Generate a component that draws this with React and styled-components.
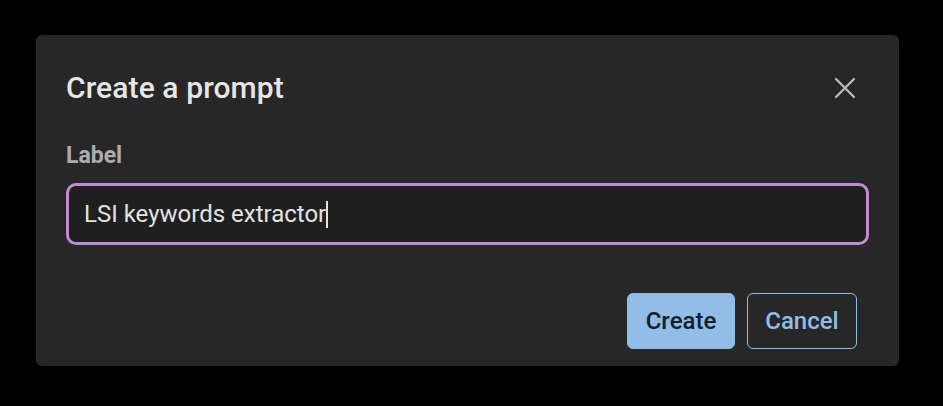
import React from "react";
import styled, { createGlobalStyle } from "styled-components";

const Global = createGlobalStyle`
  html, body { margin: 0; padding: 0; background: #000; }
  body { font-family: Roboto, "Noto Sans", sans-serif; }
`;

const Page = styled.div`
  width: 943px;
  height: 406px;
  padding: 35px 44px 40px 36px;
  box-sizing: border-box;
`;

const Dialog = styled.div`
  width: 863px;
  height: 331px;
  background: #272727;
  border-radius: 6px;
  box-sizing: border-box;
  padding: 35px 30px 17px 30px;
  display: flex;
  flex-direction: column;
`;

const Header = styled.div`
  height: 36px;
  display: flex;
  align-items: center;
  justify-content: space-between;
`;

const Title = styled.h2`
  margin: 0;
  font-size: 30px;
  line-height: 36px;
  font-weight: 500;
  letter-spacing: 0.1px;
  color: #e6e6e6;
`;

const CloseButton = styled.button`
  width: 40px;
  height: 40px;
  margin-right: 4px;
  border: none;
  background: transparent;
  display: flex;
  align-items: center;
  justify-content: center;
  padding: 0;
  cursor: pointer;
`;

const FieldLabel = styled.label`
  display: block;
  margin-top: 36px;
  font-size: 23px;
  font-weight: 700;
  color: #adadad;
  line-height: 28px;
`;

const InputBox = styled.div`
  margin-top: 13px;
  height: 62px;
  box-sizing: border-box;
  border: 3px solid #c08dd2;
  border-radius: 10px;
  background: #1f1f1f;
  display: flex;
  align-items: center;
  padding: 0 15px;
`;

const InputText = styled.span`
  font-size: 24px;
  line-height: 28px;
  color: #e2e2e2;
`;

const Caret = styled.span`
  display: inline-block;
  width: 2px;
  height: 27px;
  background: #e2e2e2;
`;

const Actions = styled.div`
  margin-top: auto;
  display: flex;
  justify-content: flex-end;
  gap: 12px;
  padding-right: 12px;
`;

const Button = styled.button`
  height: 56px;
  box-sizing: border-box;
  padding: 0;
  border-radius: 6px;
  font-family: Roboto, "Noto Sans", sans-serif;
  font-size: 24px;
  font-weight: 500;
  cursor: pointer;
  border: 1.5px solid #90bbe3;
  background: ${(p) => (p.$primary ? "#92bde6" : "transparent")};
  color: ${(p) => (p.$primary ? "#15202c" : "#92bde6")};
  width: ${(p) => (p.$primary ? "108px" : "110px")};
`;

export default function App() {
  return (
    <>
      <Global />
      <Page>
        <Dialog>
          <Header>
            <Title>Create a prompt</Title>
            <CloseButton aria-label="close">
              <svg width="22" height="22" viewBox="0 0 22 22">
                <path d="M2 2 L20 20 M20 2 L2 20" stroke="#bdbdbd" strokeWidth="2.2" strokeLinecap="round" />
              </svg>
            </CloseButton>
          </Header>
          <FieldLabel>Label</FieldLabel>
          <InputBox>
            <InputText>LSI keywords extractor</InputText>
            <Caret />
          </InputBox>
          <Actions>
            <Button $primary>Create</Button>
            <Button>Cancel</Button>
          </Actions>
        </Dialog>
      </Page>
    </>
  );
}
